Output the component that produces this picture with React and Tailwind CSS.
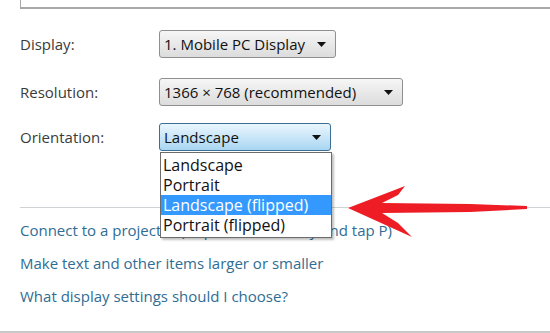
import React from "react";

const font = { fontFamily: '"Open Sans", "Noto Sans", sans-serif' };

function Caret() {
  return (
    <svg width="9" height="5" viewBox="0 0 9 5" className="shrink-0">
      <path d="M0 0h9L4.5 5z" fill="#111" />
    </svg>
  );
}

function WinLogo() {
  return (
    <svg width="13" height="13" viewBox="0 0 13 13" className="inline-block align-[-1px] mx-[2px]">
      <path d="M0 1.5 6 0.5V6H0z" fill="#f25022" />
      <path d="M7 0.3 13 -0.5V6H7z" fill="#7fba00" />
      <path d="M0 7h6v5.5L0 11.5z" fill="#00a4ef" />
      <path d="M7 7h6v6L7 12.7z" fill="#ffb900" />
    </svg>
  );
}

function Combo({ value, width, active }) {
  return (
    <div
      className={
        "flex items-center justify-between h-full rounded-[3px] border pl-[4px] pr-[9px] text-[15px] text-[#111] " +
        (active
          ? "border-[#3c6f96] bg-gradient-to-b from-[#eaf6fd] to-[#a9d6f2]"
          : "border-[#8e8f8f] bg-gradient-to-b from-[#f6f6f6] to-[#dcdcdc]")
      }
      style={{ width }}
    >
      <span className="leading-none">{value}</span>
      <Caret />
    </div>
  );
}

export default function App() {
  const options = ["Landscape", "Portrait", "Landscape (flipped)", "Portrait (flipped)"];

  return (
    <div className="relative w-[550px] h-[333px] bg-white overflow-hidden" style={font}>
      {/* frame above, cut off by the crop */}
      <div className="ml-[20px] h-[9px] border-l border-b-2 border-[#a8a8a8]" />

      <div className="grid grid-cols-[139px_auto] pl-[20px] mt-[21px] text-[15px] text-[#3b3b3b]">
        <div className="h-[28px] flex items-center">Display:</div>
        <div className="h-[28px]">
          <Combo value="1. Mobile PC Display" width={177} />
        </div>
        <div className="h-[28px] mt-[20px] flex items-center">Resolution:</div>
        <div className="h-[28px] mt-[20px]">
          <Combo value="1366 × 768 (recommended)" width={244} />
        </div>
        <div className="h-[28px] mt-[17px] flex items-center">Orientation:</div>
        <div className="h-[28px] mt-[17px]">
          <Combo value="Landscape" width={172} active />
        </div>
      </div>

      <div className="mt-[56px] ml-[20px] h-px bg-[#cfd3d6]" />

      <div className="pl-[20px] mt-[12px] flex flex-col gap-[13px] text-[15px] text-[#2f6d94] leading-[20px]">
        <div>
          Connect to a projector (or press the <WinLogo /> key and tap P)
        </div>
        <div>Make text and other items larger or smaller</div>
        <div>What display settings should I choose?</div>
      </div>

      <div className="absolute left-0 right-0 bottom-0 h-[2px] bg-[#c9c9c9]" />

      {/* open dropdown list */}
      <div className="absolute left-[160px] top-[152px] w-[172px] border border-[#6c6c6c] bg-white shadow-[2px_2px_2px_rgba(0,0,0,0.25)] py-[2px] text-[16px] text-[#111]">
        {options.map((o) => (
          <div
            key={o}
            className={
              "h-[20px] leading-[20px] pl-[2px] " +
              (o === "Landscape (flipped)" ? "bg-[#3399ff] text-white" : "")
            }
          >
            {o}
          </div>
        ))}
      </div>

      {/* red arrow drawn over the screenshot */}
      <svg className="absolute left-0 top-0" width="550" height="333" viewBox="0 0 550 333">
        <path
          d="M348 208 L405 186 L398 195 L382 203 L470 204 L527 206 L527 209 L470 212 L382 213 L398 223 L412 237 Z"
          fill="#ee1c24"
        />
      </svg>
    </div>
  );
}
